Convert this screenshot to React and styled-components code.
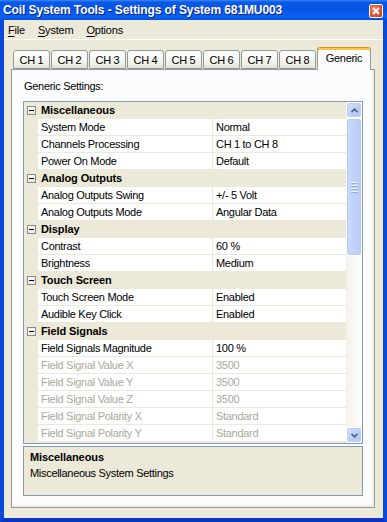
import React from 'react'
import styled, { createGlobalStyle } from 'styled-components'

const GlobalStyle = createGlobalStyle`
  html, body {
    margin: 0;
    padding: 0;
  }
  body {
    width: 387px;
    height: 522px;
    overflow: hidden;
    background: #ece9d8;
    font-family: "Liberation Sans", Arial, sans-serif;
    font-size: 11px;
    color: #000;
  }
`

const Window = styled.div`
  width: 387px;
  height: 522px;
  display: flex;
  flex-direction: column;
`

const TitleBar = styled.div`
  height: 20px;
  flex: none;
  display: flex;
  align-items: center;
  justify-content: space-between;
  padding: 0 4px 0 3px;
  background: linear-gradient(
    to bottom,
    #3b8cf8 0%,
    #0a5ae8 10%,
    #0554e6 45%,
    #0a62f2 85%,
    #0658ec 95%,
    #0343d4 100%
  );
  color: #fff;
  font-weight: bold;
  font-size: 12px;
  letter-spacing: -0.1px;
  text-shadow: 1px 1px 0 #0a1f8a;
`

const CloseButton = styled.div`
  width: 12px;
  height: 12px;
  margin-top: 1px;
  border: 1px solid #fff;
  border-radius: 2px;
  background: radial-gradient(circle at 35% 35%, #f08c6c, #e0552f 55%, #c83f1c);
  display: flex;
  align-items: center;
  justify-content: center;
`

const Frame = styled.div`
  flex: 1;
  display: flex;
  flex-direction: column;
  border-left: 4px solid #0a48de;
  border-right: 4px solid #0a48de;
  border-bottom: 4px solid #0a36c8;
  background: #ece9d8;
  min-height: 0;
`

const MenuBar = styled.div`
  height: 19px;
  flex: none;
  display: flex;
  align-items: center;
  padding-left: 4px;
  gap: 13px;
  border-bottom: 1px solid #fff;
  letter-spacing: -0.2px;
`

const MenuItem = styled.span`
  u {
    text-decoration: underline;
    text-underline-offset: 2px;
  }
`

const Content = styled.div`
  flex: 1;
  display: flex;
  flex-direction: column;
  padding: 8px 8px 10px 7px;
  min-height: 0;
`

const TabStrip = styled.div`
  height: 22px;
  flex: none;
  display: flex;
  align-items: flex-end;
  gap: 1px;
  padding-left: 2px;
  margin-bottom: -1px;
  position: relative;
  z-index: 1;
`

const Tab = styled.div`
  box-sizing: border-box;
  width: ${p => (p.$wide ? 54 : 37)}px;
  height: ${p => (p.$active ? 23 : 19)}px;
  margin-bottom: ${p => (p.$active ? 0 : 1)}px;
  display: flex;
  align-items: center;
  justify-content: center;
  padding-bottom: ${p => (p.$active ? 3 : 0)}px;
  border: 1px solid #919b9c;
  border-bottom: ${p => (p.$active ? 'none' : '1px solid #919b9c')};
  border-top-color: ${p => (p.$active ? '#e68b2c' : '#919b9c')};
  border-radius: 3px 3px 0 0;
  background: ${p =>
    p.$active
      ? '#fcfcfe'
      : 'linear-gradient(to bottom, #fefefe 0%, #f7f7f4 40%, #eeede6 80%, #e2e0d6 100%)'};
  box-shadow: ${p => (p.$active ? 'inset 0 2px 0 #ffc73c' : 'none')};
  letter-spacing: -0.3px;
  font-size: 11px;
`

const Panel = styled.div`
  flex: 1;
  display: flex;
  flex-direction: column;
  border: 1px solid #919b9c;
  background: #fcfcfe;
  padding: 9px 11px 11px 11px;
  box-shadow: inset -2px -2px 0 #f1efe6, inset -1px -1px 0 #e6e3d6;
  min-height: 0;
`

const Heading = styled.div`
  height: 14px;
  line-height: 14px;
  margin-bottom: 8px;
  padding-left: 1px;
  letter-spacing: -0.3px;
`

const Grid = styled.div`
  height: 341px;
  flex: none;
  display: flex;
  border: 1px solid #7f9db9;
  background: #ece9d8;
  overflow: hidden;
`

const Rows = styled.div`
  flex: 1;
  display: flex;
  flex-direction: column;
  gap: 1px;
  overflow: hidden;
`

const CategoryRow = styled.div`
  height: 16px;
  flex: none;
  display: flex;
  align-items: center;
  padding-left: 3px;
  background: #ece9d8;
  font-weight: bold;
  letter-spacing: -0.1px;
`

const Toggle = styled.span`
  box-sizing: border-box;
  width: 9px;
  height: 9px;
  margin-right: 5px;
  border: 1px solid #8a8a8a;
  background: linear-gradient(135deg, #ffffff, #e6e4dc);
  position: relative;
  &::after {
    content: '';
    position: absolute;
    left: 1px;
    top: 3px;
    width: 5px;
    height: 1px;
    background: #000;
  }
`

const ItemRow = styled.div`
  height: 16px;
  flex: none;
  display: grid;
  grid-template-columns: 14px 174px 135px;
  color: ${p => (p.$disabled ? '#aca899' : '#000')};
  letter-spacing: -0.3px;
`

const Cell = styled.div`
  background: #fff;
  line-height: 16px;
  padding-left: 3px;
  white-space: nowrap;
  overflow: hidden;
  margin-left: ${p => (p.$value ? 1 : 0)}px;
`

const Gutter = styled.div`
  background: #ece9d8;
`

const ScrollBar = styled.div`
  width: 16px;
  flex: none;
  display: flex;
  flex-direction: column;
  background: linear-gradient(to right, #f3f1ea, #fdfdfa);
`

const ScrollButton = styled.div`
  box-sizing: border-box;
  height: 16px;
  flex: none;
  border: 1px solid #fff;
  border-radius: 3px;
  background: linear-gradient(135deg, #d6e2fd, #b9cdf8 60%, #aec4f6);
  box-shadow: inset 0 0 0 1px #bfd0f7;
  display: flex;
  align-items: center;
  justify-content: center;
`

const Track = styled.div`
  flex: 1;
  display: flex;
  flex-direction: column;
`

const Thumb = styled.div`
  box-sizing: border-box;
  height: 138px;
  border: 1px solid #fff;
  border-radius: 3px;
  background: linear-gradient(to right, #ccdafd, #c0d2fa 50%, #b8cbf7);
  box-shadow: inset 0 0 0 1px #b9cbf3;
  display: flex;
  flex-direction: column;
  align-items: center;
  justify-content: center;
  gap: 1px;
`

const Grip = styled.span`
  width: 7px;
  height: 1px;
  background: #eef3fe;
  box-shadow: 0 1px 0 #8fb0f0;
  margin-bottom: 1px;
`

const Description = styled.div`
  margin-top: 2px;
  height: 50px;
  box-sizing: border-box;
  flex: none;
  border: 1px solid #7f9db9;
  background: #ece9d8;
  padding: 2px 6px;
  line-height: 16px;
`

const DescTitle = styled.div`
  font-weight: bold;
  letter-spacing: -0.1px;
`

const DescText = styled.div`
  letter-spacing: -0.3px;
`

const Chevron = ({ up }) => (
  <svg width="7" height="5" viewBox="0 0 7 5">
    <path
      d={up ? 'M0.5 4.2 L3.5 1.2 L6.5 4.2' : 'M0.5 0.8 L3.5 3.8 L6.5 0.8'}
      stroke="#4d6185"
      strokeWidth="1.6"
      fill="none"
    />
  </svg>
)

const categories = [
  {
    name: 'Miscellaneous',
    items: [
      ['System Mode', 'Normal'],
      ['Channels Processing', 'CH 1 to CH 8'],
      ['Power On Mode', 'Default']
    ]
  },
  {
    name: 'Analog Outputs',
    items: [
      ['Analog Outputs Swing', '+/- 5 Volt'],
      ['Analog Outputs Mode', 'Angular Data']
    ]
  },
  {
    name: 'Display',
    items: [
      ['Contrast', '60 %'],
      ['Brightness', 'Medium']
    ]
  },
  {
    name: 'Touch Screen',
    items: [
      ['Touch Screen Mode', 'Enabled'],
      ['Audible Key Click', 'Enabled']
    ]
  },
  {
    name: 'Field Signals',
    items: [
      ['Field Signals Magnitude', '100 %'],
      ['Field Signal Value X', '3500', true],
      ['Field Signal Value Y', '3500', true],
      ['Field Signal Value Z', '3500', true],
      ['Field Signal Polarity X', 'Standard', true],
      ['Field Signal Polarity Y', 'Standard', true]
    ]
  }
]

const tabs = ['CH 1', 'CH 2', 'CH 3', 'CH 4', 'CH 5', 'CH 6', 'CH 7', 'CH 8']

export default function App() {
  return (
    <Window>
      <GlobalStyle />
      <TitleBar>
        <span>Coil System Tools - Settings of System 681MU003</span>
        <CloseButton>
          <svg width="8" height="8" viewBox="0 0 8 8">
            <path d="M1 1 L7 7 M7 1 L1 7" stroke="#fff" strokeWidth="1.8" />
          </svg>
        </CloseButton>
      </TitleBar>
      <Frame>
        <MenuBar>
          <MenuItem><u>F</u>ile</MenuItem>
          <MenuItem><u>S</u>ystem</MenuItem>
          <MenuItem><u>O</u>ptions</MenuItem>
        </MenuBar>
        <Content>
          <TabStrip>
            {tabs.map(t => (
              <Tab key={t}>{t}</Tab>
            ))}
            <Tab $active $wide>Generic</Tab>
          </TabStrip>
          <Panel>
            <Heading>Generic Settings:</Heading>
            <Grid>
              <Rows>
                {categories.map(cat => (
                  <React.Fragment key={cat.name}>
                    <CategoryRow>
                      <Toggle />
                      {cat.name}
                    </CategoryRow>
                    {cat.items.map(([label, value, disabled]) => (
                      <ItemRow key={label} $disabled={disabled}>
                        <Gutter />
                        <Cell>{label}</Cell>
                        <Cell $value>{value}</Cell>
                      </ItemRow>
                    ))}
                  </React.Fragment>
                ))}
              </Rows>
              <ScrollBar>
                <ScrollButton>
                  <Chevron up />
                </ScrollButton>
                <Track>
                  <Thumb>
                    <Grip />
                    <Grip />
                    <Grip />
                    <Grip />
                  </Thumb>
                </Track>
                <ScrollButton>
                  <Chevron />
                </ScrollButton>
              </ScrollBar>
            </Grid>
            <Description>
              <DescTitle>Miscellaneous</DescTitle>
              <DescText>Miscellaneous System Settings</DescText>
            </Description>
          </Panel>
        </Content>
      </Frame>
    </Window>
  )
}
